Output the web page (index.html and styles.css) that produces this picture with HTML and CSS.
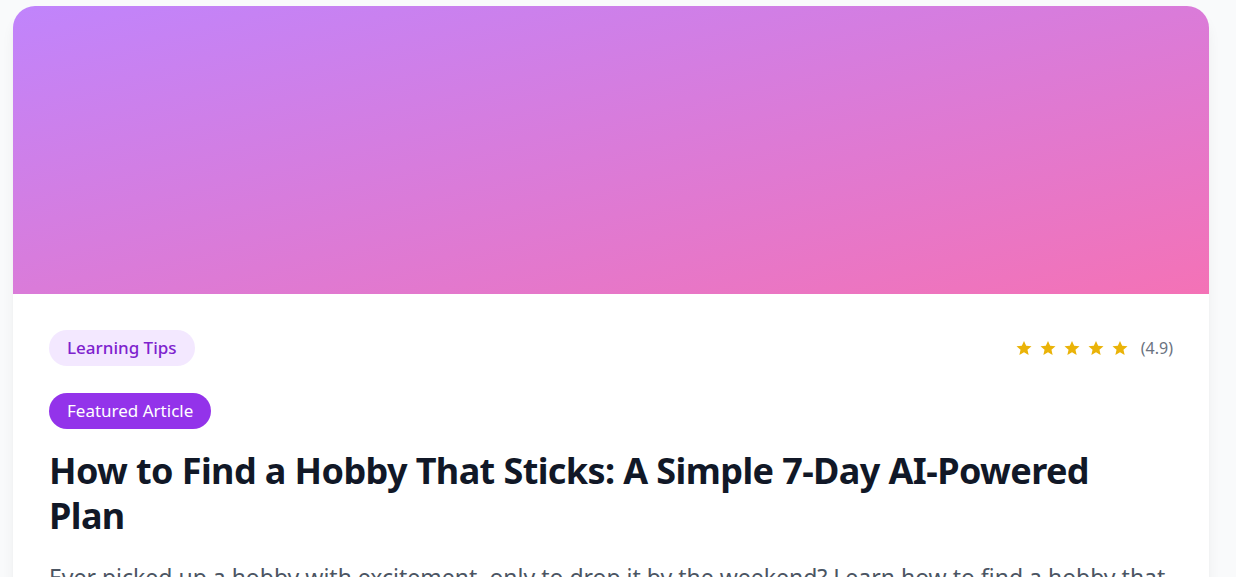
FILE: index.html
```html
<!DOCTYPE html>
<html lang="en">
<head>
<meta charset="utf-8">
<title>How to Find a Hobby That Sticks</title>
<link rel="stylesheet" href="styles.css">
</head>
<body>
<main class="page">
  <article class="card">
    <div class="hero"></div>
    <div class="body">
      <div class="meta-row">
        <span class="category">Learning Tips</span>
        <div class="rating">
          <div class="stars">
            <svg class="star" viewBox="0 0 24 24"><path d="M12 2.5l2.9 6.6 7.1.6-5.4 4.7 1.6 7-6.2-3.7-6.2 3.7 1.6-7L2 9.7l7.1-.6z"/></svg>
            <svg class="star" viewBox="0 0 24 24"><path d="M12 2.5l2.9 6.6 7.1.6-5.4 4.7 1.6 7-6.2-3.7-6.2 3.7 1.6-7L2 9.7l7.1-.6z"/></svg>
            <svg class="star" viewBox="0 0 24 24"><path d="M12 2.5l2.9 6.6 7.1.6-5.4 4.7 1.6 7-6.2-3.7-6.2 3.7 1.6-7L2 9.7l7.1-.6z"/></svg>
            <svg class="star" viewBox="0 0 24 24"><path d="M12 2.5l2.9 6.6 7.1.6-5.4 4.7 1.6 7-6.2-3.7-6.2 3.7 1.6-7L2 9.7l7.1-.6z"/></svg>
            <svg class="star" viewBox="0 0 24 24"><path d="M12 2.5l2.9 6.6 7.1.6-5.4 4.7 1.6 7-6.2-3.7-6.2 3.7 1.6-7L2 9.7l7.1-.6z"/></svg>
          </div>
          <span class="score">(4.9)</span>
        </div>
      </div>
      <span class="featured">Featured Article</span>
      <h1 class="title">How to Find a Hobby That Sticks: A Simple 7-Day AI-Powered Plan</h1>
      <p class="excerpt">Ever picked up a hobby with excitement, only to drop it by the weekend? Learn how to find a hobby that sticks with a simple 7-day plan powered by AI.</p>
    </div>
  </article>
</main>
</body>
</html>
```

FILE: styles.css
```css
* { box-sizing: border-box; }
html, body {
  margin: 0;
  padding: 0;
  background: #f9fafb;
  font-family: "Noto Sans", "Open Sans", Arial, sans-serif;
  overflow: hidden;
}
.page {
  padding: 6px 27px 0 13px;
}
.card {
  background: #ffffff;
  border-radius: 22px;
  overflow: hidden;
  box-shadow: 0 10px 15px -3px rgba(0,0,0,0.08), 0 4px 6px -4px rgba(0,0,0,0.06);
}
.hero {
  height: 288px;
  background: linear-gradient(to bottom right, #c084fc, #f472b6);
}
.body {
  padding: 36px 36px 40px;
}
.meta-row {
  display: flex;
  align-items: center;
  justify-content: space-between;
}
.category {
  display: inline-block;
  background: #f3e8ff;
  color: #7e22ce;
  font-size: 17px;
  font-weight: 500;
  line-height: 24px;
  padding: 6px 18px;
  border-radius: 999px;
}
.rating {
  display: flex;
  align-items: center;
}
.stars {
  display: flex;
  gap: 6px;
}
.star {
  width: 18px;
  height: 18px;
  fill: #eab308;
}
.score {
  margin-left: 12px;
  color: #6b7280;
  font-size: 16px;
  line-height: 24px;
}
.featured {
  display: inline-block;
  margin-top: 27px;
  background: #9333ea;
  color: #ffffff;
  font-size: 17px;
  line-height: 24px;
  padding: 6px 18px;
  border-radius: 999px;
}
.title {
  margin: 19px 0 0;
  color: #111827;
  font-size: 36px;
  font-weight: 700;
  line-height: 45px;
  letter-spacing: -0.6px;
}
.excerpt {
  margin: 22px 0 0;
  color: #4b5563;
  font-size: 23px;
  line-height: 34px;
}
```
